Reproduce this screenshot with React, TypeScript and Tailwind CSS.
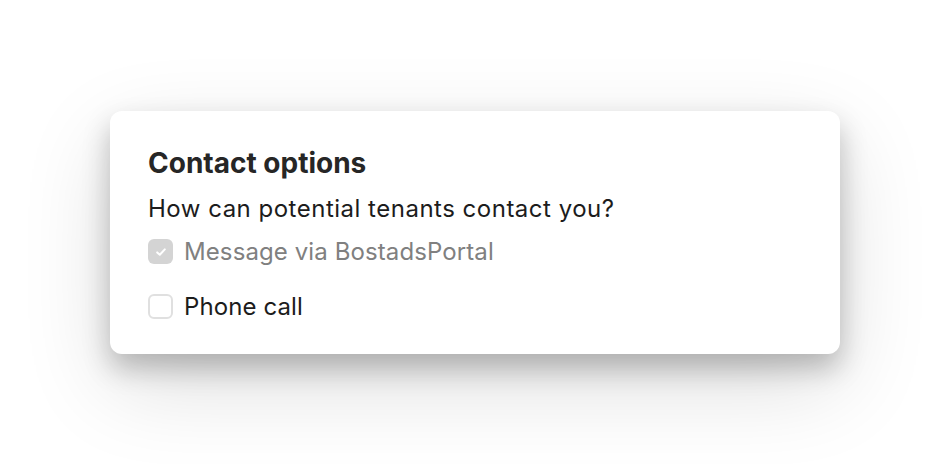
import React from "react";

function Check({ checked }: { checked?: boolean }) {
  if (checked) {
    return (
      <span className="flex h-[25px] w-[25px] shrink-0 items-center justify-center rounded-[6px] bg-[#d4d4d4]">
        <svg width="14" height="14" viewBox="0 0 14 14" fill="none">
          <path d="M3.2 7.4 L5.8 9.8 L10.8 4.4" stroke="#ffffff" strokeWidth="2" strokeLinecap="round" strokeLinejoin="round" />
        </svg>
      </span>
    );
  }
  return <span className="h-[25px] w-[25px] shrink-0 rounded-[6px] border-[2px] border-[#e0e0e0] bg-white" />;
}

export default function App() {
  return (
    <div className="flex h-[464px] w-[950px] items-center justify-center bg-white" style={{ fontFamily: "Inter, 'Noto Sans', sans-serif" }}>
      <div className="flex h-[243px] w-[730px] flex-col rounded-[12px] bg-white px-[38px] pt-[35px] shadow-[0_14px_28px_rgba(0,0,0,0.24),0_30px_90px_rgba(0,0,0,0.14)]">
        <h2 className="text-[28px] font-bold leading-[34px] text-[#262626]">Contact options</h2>
        <p className="mt-[14px] text-[24px] leading-[30px] tracking-[0.5px] text-[#1c1c1c]">How can potential tenants contact you?</p>
        <label className="mt-[13px] flex items-center gap-[11px]">
          <Check checked />
          <span className="text-[24px] leading-[30px] tracking-[0.1px] text-[#808080]">Message via BostadsPortal</span>
        </label>
        <label className="mt-[25px] flex items-center gap-[11px]">
          <Check />
          <span className="text-[24px] leading-[30px] tracking-[0.1px] text-[#1c1c1c]">Phone call</span>
        </label>
      </div>
    </div>
  );
}
